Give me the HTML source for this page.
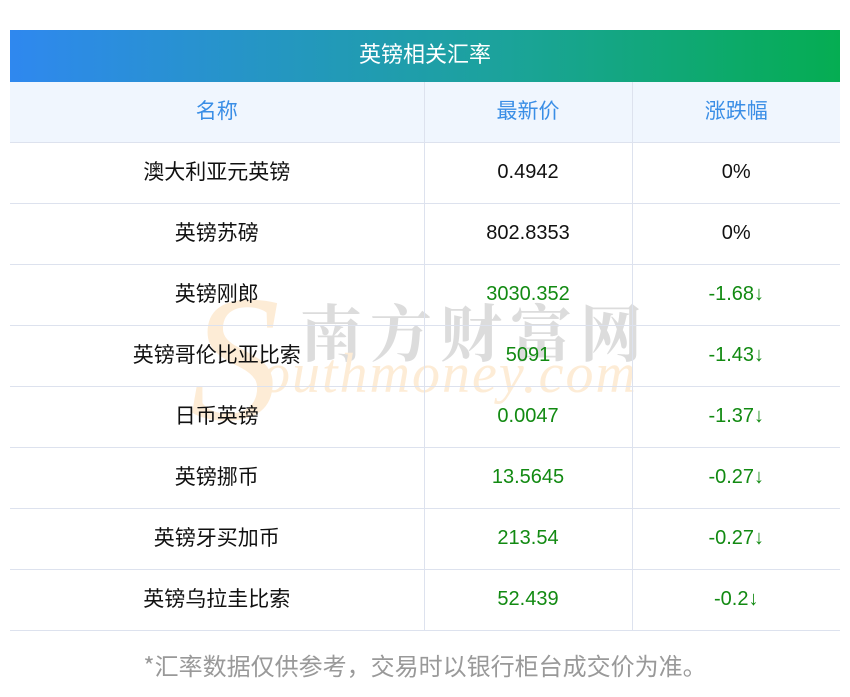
<!DOCTYPE html>
<html><head><meta charset="utf-8"><style>
body{margin:0;width:850px;height:697px;background:#fff;font-family:"Liberation Sans","Noto Sans CJK SC",sans-serif;position:relative;overflow:hidden}
.hd{position:absolute;left:10px;top:30px;width:830px;height:52px;background:linear-gradient(90deg,#2f88ef,#1ba39a 60%,#05ad52);color:#fff;font-size:22px;text-align:center;line-height:46px;font-family:"Noto Sans CJK SC",sans-serif}
table{position:absolute;left:10px;top:82px;width:830px;border-collapse:collapse;table-layout:fixed;z-index:2}
td,th{border:1px solid #dde2ee;text-align:center;font-size:20px;height:57px;padding:0 0 3px 0;font-weight:normal;color:#111;line-height:20px}
tr:first-child th{border-top:none}
td:first-child,th:first-child{border-left:none}
td:last-child,th:last-child{border-right:none}
th{background:#f0f6fe;color:#3a8ee6;font-size:21px;font-family:"Noto Sans CJK SC",sans-serif}
th span{position:relative;top:-1px}
td:first-child span{position:relative;top:-1px}
td:first-child{font-family:"Noto Sans CJK SC",sans-serif;font-size:21px}
.g{color:#128a12}
.ft{position:absolute;left:0;width:850px;top:648px;text-align:center;color:#999;font-size:24px;font-family:"Noto Sans CJK SC",sans-serif;line-height:34px}
.wm{position:absolute;z-index:1}
.wm1{left:300px;top:285px;font-size:62px;color:#dcdcdc;letter-spacing:8px;font-weight:bold;font-family:"Noto Serif CJK SC",serif}
.wm2{left:262px;top:342px;font-size:56px;color:#fdecd6;font-style:italic;font-family:"Liberation Serif",serif;letter-spacing:2px}
.wm3{left:190px;top:255px;font-size:180px;color:#fdecd6;font-style:italic;font-family:"Liberation Serif",serif}
</style></head><body>
<div class="hd">英镑相关汇率</div>
<div class="wm wm3">S</div>
<div class="wm wm1">南方财富网</div>
<div class="wm wm2">outhmoney.com</div>
<table>
<colgroup><col style="width:414px"><col style="width:208px"><col style="width:208px"></colgroup>
<tr><th><span>名称</span></th><th><span>最新价</span></th><th><span>涨跌幅</span></th></tr>
<tr><td><span>澳大利亚元英镑</span></td><td>0.4942</td><td>0%</td></tr>
<tr><td><span>英镑苏磅</span></td><td>802.8353</td><td>0%</td></tr>
<tr><td><span>英镑刚郎</span></td><td class="g">3030.352</td><td class="g">-1.68↓</td></tr>
<tr><td><span>英镑哥伦比亚比索</span></td><td class="g">5091</td><td class="g">-1.43↓</td></tr>
<tr><td><span>日币英镑</span></td><td class="g">0.0047</td><td class="g">-1.37↓</td></tr>
<tr><td><span>英镑挪币</span></td><td class="g">13.5645</td><td class="g">-0.27↓</td></tr>
<tr><td><span>英镑牙买加币</span></td><td class="g">213.54</td><td class="g">-0.27↓</td></tr>
<tr><td><span>英镑乌拉圭比索</span></td><td class="g">52.439</td><td class="g">-0.2↓</td></tr>
</table>
<div class="ft">*汇率数据仅供参考，交易时以银行柜台成交价为准。</div>
</body></html>
